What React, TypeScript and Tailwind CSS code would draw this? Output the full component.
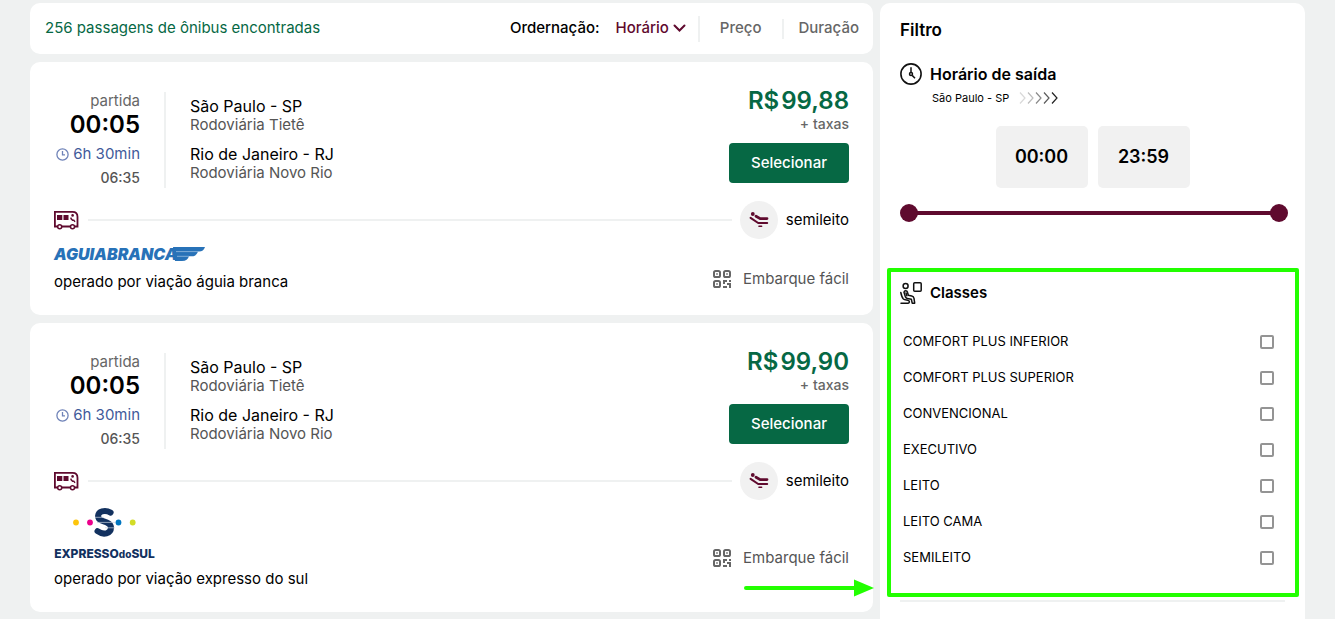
import type { ReactNode } from "react";

function BusIcon() {
  return (
    <svg width="26" height="20" viewBox="0 0 26 20" fill="none" className="shrink-0" aria-hidden="true">
      <path d="M4 16.5H.9V1.900h17.600c3.400 0 5 1.800 5 4.800v9.800h-2.500M8 16.500h9" stroke="#5f0a2e" strokeWidth="1.8" />
      <circle cx="5.700" cy="16.700" r="2" stroke="#5f0a2e" strokeWidth="1.5" />
      <circle cx="18.500" cy="16.700" r="2" stroke="#5f0a2e" strokeWidth="1.5" />
      <path d="M3 5h5.300v5H3zM9.500 5h5v5h-5z" fill="#5f0a2e" />
      <circle cx="18.600" cy="5.400" r="1.300" fill="#5f0a2e" />
      <path d="M17 7.400v1.200l1.600 1.600h1.200l1.200 1.600" stroke="#5f0a2e" strokeWidth="1.4" />
    </svg>
  );
}

function SeatIcon() {
  return (
    <svg width="20" height="18" viewBox="0 0 20 18" fill="none" aria-hidden="true">
      <circle cx="3.8" cy="3" r="1.9" fill="#5f0a2e" />
      <path d="M7 5.200l4.200 2.400H18" stroke="#5f0a2e" strokeWidth="2.800" strokeLinecap="round" />
      <path d="M1.600 6.800l7.600 5.200H18.200" stroke="#5f0a2e" strokeWidth="2" strokeLinecap="round" strokeLinejoin="round" />
      <path d="M10 15.200h2.600" stroke="#5f0a2e" strokeWidth="1.600" strokeLinecap="round" />
    </svg>
  );
}

function QrIcon() {
  return (
    <svg width="18" height="18" viewBox="0 0 18 18" fill="none" aria-hidden="true">
      <g stroke="#666" strokeWidth="2">
        <rect x="1" y="1" width="6" height="6" rx="1.6" />
        <rect x="11" y="1" width="6" height="6" rx="1.6" />
        <rect x="1" y="11" width="6" height="6" rx="1.6" />
      </g>
      <path
        d="M3.2 3.2h1.6v1.6H3.2zM13.2 3.2h1.6v1.6h-1.6zM3.2 13.2h1.6v1.6H3.2zM10 10h4v2h-2v2h-2zM16 10h2v2h-2zM14 13h4v5h-2v-3h-2zM10 16h4v2h-4z"
        fill="#666"
      />
    </svg>
  );
}

function SmallClock() {
  return (
    <svg width="13" height="13" viewBox="0 0 13 13" fill="none" stroke="#6f83b8" aria-hidden="true">
      <circle cx="6.5" cy="6.5" r="5.6" strokeWidth="1.3" />
      <path d="M6.5 3v3.8H9" strokeWidth="1.3" />
    </svg>
  );
}

function BigClock() {
  return (
    <svg width="22" height="22" viewBox="0 0 22 22" fill="none" stroke="#111" aria-hidden="true">
      <circle cx="11" cy="11" r="10.1" strokeWidth="1.6" />
      <path d="M11 4.2v5.3M12.2 12.4l2.8 2.8" strokeWidth="1.5" />
      <circle cx="11" cy="11" r="1.5" strokeWidth="1.5" />
    </svg>
  );
}

function PassengerIcon() {
  return (
    <svg width="22" height="22" viewBox="0 0 22 22" fill="none" stroke="#111" strokeWidth="1.5" strokeLinejoin="round" strokeLinecap="round" aria-hidden="true">
      <rect x="13.700" y="0.800" width="7.500" height="8.400" rx="1" />
      <circle cx="5.600" cy="4" r="2.500" />
      <path d="M.8 10.500c.6 3 1.300 5.300 2.600 6.500c1.400 1.200 3.600.9 5.200 1.600c1.300.7.900 2.600-.5 2.600H1" />
      <path d="M4 10.200c.4-1.900 3-1.900 3.500.1l.8 2.900 3.400.8c1.400.3 2.100 1.100 2.300 2.300l.7 4.900h-2.500l-.8-3.900-4.100-.8c-1-.2-1.600-.8-1.900-1.700z" />
      <path d="M6 11l.9 2.800" />
    </svg>
  );
}

function FadingChevrons() {
  const tones = ["#d9d9d9", "#bdbdbd", "#8a8a8a", "#5c5c5c", "#222222"];
  return (
    <svg width="40" height="12" viewBox="0 0 40 12" fill="none" aria-hidden="true">
      {tones.map((tone, i) => (
        <path key={tone} d={`M${1 + i * 8} .5l5 5.5-5 5.5`} stroke={tone} strokeWidth="1.2" />
      ))}
    </svg>
  );
}

function AguiaBrancaLogo() {
  return (
    <div className="flex h-4 items-center text-[#2872b8]">
      <span className="text-base leading-4 font-black italic">AGUIABRANCA</span>
      <svg width="36" height="14" viewBox="0 0 36 14" className="-ml-2 shrink-0" aria-hidden="true">
        <path d="M4 0h32c-1 3-3 4.600-6 4.600h-1c-1 3-3 4.700-6 4.700h-3c-1 3-3 4.700-7 4.700H6z" fill="#2872b8" />
        <path d="M7 4.600h22M8 9.300h12" stroke="#a9c7e4" strokeWidth=".7" />
      </svg>
    </div>
  );
}

function ExpressoDoSulLogo() {
  return (
    <div className="flex h-[52px] w-[101px] flex-col items-center justify-between text-[#12315f]">
      <svg width="64" height="31" viewBox="0 0 64 31" fill="none" aria-hidden="true">
        <circle cx="3" cy="15.500" r="2.900" fill="#fdc50c" />
        <circle cx="17" cy="15.500" r="2.900" fill="#ec008c" />
        <path
          d="M37.600 5.600C34.500 3.800 31.600 3.700 29 4.400C24.200 5.800 23.800 11.300 28 13.300C31.300 14.900 38 15.600 38 20.600C38 26.600 30.500 28.600 24.500 24.200"
          stroke="#12315f"
          strokeWidth="6"
          strokeLinecap="round"
        />
        <path d="M22 10.300h9M24 15.400h18M32 20.800h10" stroke="#c9d2e0" strokeWidth=".7" />
        <circle cx="45.500" cy="15.500" r="2.900" fill="#0076c0" />
        <circle cx="59.700" cy="15.500" r="2.900" fill="#d3dc26" />
      </svg>
      <span className="text-xs leading-[10px] font-extrabold whitespace-nowrap">
        EXPRESSO<span className="text-[10px]">do</span>SUL
      </span>
    </div>
  );
}

type Trip = { price: string; operator: string; logo: ReactNode };

const trips: Trip[] = [
  { price: "99,88", operator: "operado por viação águia branca", logo: <AguiaBrancaLogo /> },
  { price: "99,90", operator: "operado por viação expresso do sul", logo: <ExpressoDoSulLogo /> },
];

function TripCard({ price, operator, logo, children }: Trip & { children?: ReactNode }) {
  return (
    <article className="relative rounded-[10px] bg-white px-6 pt-[25px] pb-[23px]">
      <div className="flex items-start">
        <div className="mt-[5px] flex w-28 flex-col items-end border-r-2 border-[#eff1f1] pr-6">
          <span className="text-[15px] leading-[18px] text-[#666]">partida</span>
          <strong className="text-2xl leading-[30px] font-semibold">00:05</strong>
          <span className="flex items-center gap-1 text-[15px] leading-7 whitespace-nowrap text-[#3f5a9a]">
            <SmallClock />
            6h 30min
          </span>
          <span className="text-sm leading-5 font-medium text-[#555]">06:35</span>
        </div>
        <div className="mt-[9px] ml-6 flex-1">
          <p className="text-base leading-5">São Paulo - SP</p>
          <p className="text-[15px] leading-[18px] text-[#555]">Rodoviária Tietê</p>
          <p className="mt-[10px] text-base leading-5">Rio de Janeiro - RJ</p>
          <p className="text-[15px] leading-[18px] text-[#555]">Rodoviária Novo Rio</p>
        </div>
        <div className="flex flex-col items-end">
          <p className="flex gap-[2px] text-2xl leading-7 font-semibold text-[#066844]">
            <span>R$</span>
            <span>{price}</span>
          </p>
          <p className="text-sm leading-[18px] font-medium text-[#666]">+ taxas</p>
          <button type="button" className="mt-[10px] h-10 w-[120px] rounded bg-[#066844] text-[15px] font-medium text-white">
            Selecionar
          </button>
        </div>
      </div>

      <div className="mt-[13px] flex items-center">
        <BusIcon />
        <div className="mx-2 h-[2px] flex-1 bg-[#eff1f1]" />
        <span className="flex size-[38px] items-center justify-center rounded-full bg-[#f1f1f1]">
          <SeatIcon />
        </span>
        <span className="ml-2 text-[15px] leading-5">semileito</span>
      </div>

      <div className="flex items-center justify-between">
        <div className="pt-[7px]">
          {logo}
          <p className="mt-[10px] text-[15px] leading-5">{operator}</p>
        </div>
        <p className="flex items-center gap-3 pt-[27px] text-[15px] leading-5 text-[#555]">
          <QrIcon />
          Embarque fácil
        </p>
      </div>
      {children}
    </article>
  );
}

const classes = [
  "COMFORT PLUS INFERIOR",
  "COMFORT PLUS SUPERIOR",
  "CONVENCIONAL",
  "EXECUTIVO",
  "LEITO",
  "LEITO CAMA",
  "SEMILEITO",
];

const rangeClass =
  "pointer-events-none absolute inset-0 m-0 h-[18px] w-full appearance-none bg-transparent [&::-webkit-slider-thumb]:pointer-events-auto [&::-webkit-slider-thumb]:size-[18px] [&::-webkit-slider-thumb]:appearance-none [&::-webkit-slider-thumb]:rounded-full [&::-webkit-slider-thumb]:bg-[#5f0a2e]";

function TimeSlider() {
  return (
    <div className="relative mt-4 flex h-[18px] items-center">
      <div className="mx-2 h-1 flex-1 bg-[#5f0a2e]" />
      <input type="range" aria-label="Horário inicial" min={0} max={1439} defaultValue={0} className={rangeClass} />
      <input type="range" aria-label="Horário final" min={0} max={1439} defaultValue={1439} className={rangeClass} />
    </div>
  );
}

export default function App() {
  return (
    <div className="flex min-h-screen items-stretch gap-[7px] bg-[#eff1f1] px-[30px] pt-[3px] font-[Inter,sans-serif] text-black">
      <main className="flex min-w-0 flex-1 flex-col gap-2">
        <header className="flex h-[51px] items-center rounded-[10px] bg-white pr-[14px] pl-[15px] text-[15px]">
          <h1 className="flex-1 text-[#066844]">256 passagens de ônibus encontradas</h1>
          <span className="font-medium">Ordernação:</span>
          <button type="button" className="ml-4 flex items-center gap-1 font-medium text-[#5f0a2e]">
            Horário
            <svg width="13" height="9" viewBox="0 0 13 9" fill="none" stroke="#5f0a2e" strokeWidth="2" strokeLinecap="round" aria-hidden="true">
              <path d="M1.500 1.500l5 5 5-5" />
            </svg>
          </button>
          <span className="ml-3 h-[26px] w-[2px] bg-[#eff1f1]" />
          <button type="button" className="ml-5 font-medium text-[#666]">Preço</button>
          <span className="ml-5 h-5 w-[2px] bg-[#eff1f1]" />
          <button type="button" className="ml-[15px] font-medium text-[#666]">Duração</button>
        </header>

        <TripCard {...trips[0]} />
        <TripCard {...trips[1]}>
          <svg width="130" height="18" viewBox="0 0 130 18" className="absolute -right-px bottom-[15px]" aria-hidden="true">
            <path d="M2 9h110" stroke="#22ff00" strokeWidth="4" strokeLinecap="round" />
            <path d="M110 .5L130 9l-20 8.500z" fill="#22ff00" />
          </svg>
        </TripCard>
      </main>

      <aside className="w-[425px] shrink-0 rounded-t-[10px] bg-white px-5 pt-[15px]">
        <h2 className="text-[17px] leading-6 font-semibold">Filtro</h2>

        <section className="-mr-[3px] mt-[18px]">
          <div className="flex items-center gap-2">
            <BigClock />
            <h3 className="text-base leading-7 font-semibold">Horário de saída</h3>
          </div>
          <div className="flex items-center gap-[10px] pl-8 text-[11px] leading-5">
            São Paulo - SP
            <FadingChevrons />
          </div>
          <div className="mt-[18px] mr-[3px] flex justify-center gap-[10px]">
            <output className="flex h-[62px] w-[92px] items-center justify-center rounded-[5px] bg-[#f1f1f1] text-lg font-semibold">00:00</output>
            <output className="flex h-[62px] w-[92px] items-center justify-center rounded-[5px] bg-[#f1f1f1] text-lg font-semibold">23:59</output>
          </div>
          <TimeSlider />
        </section>

        <section className="relative mt-[57px] border-b-2 border-[#eff1f1] pb-6">
          <div className="flex items-center gap-2">
            <PassengerIcon />
            <h3 className="text-[15px] leading-7 font-semibold">Classes</h3>
          </div>
          <ul className="mt-[17px] pr-[11px] pl-[3px]">
            {classes.map((name) => (
              <li key={name}>
                <label className="flex h-9 items-center justify-between text-[13px]">
                  {name}
                  <input type="checkbox" className="size-[14px] appearance-none rounded-[2px] border-2 border-[#949494] bg-white checked:bg-[#5f0a2e]" />
                </label>
              </li>
            ))}
          </ul>
          <div className="pointer-events-none absolute -top-[11px] -right-[14px] bottom-[3px] -left-[13px] rounded-[2px] border-4 border-[#22ff00]" />
        </section>
      </aside>
    </div>
  );
}
